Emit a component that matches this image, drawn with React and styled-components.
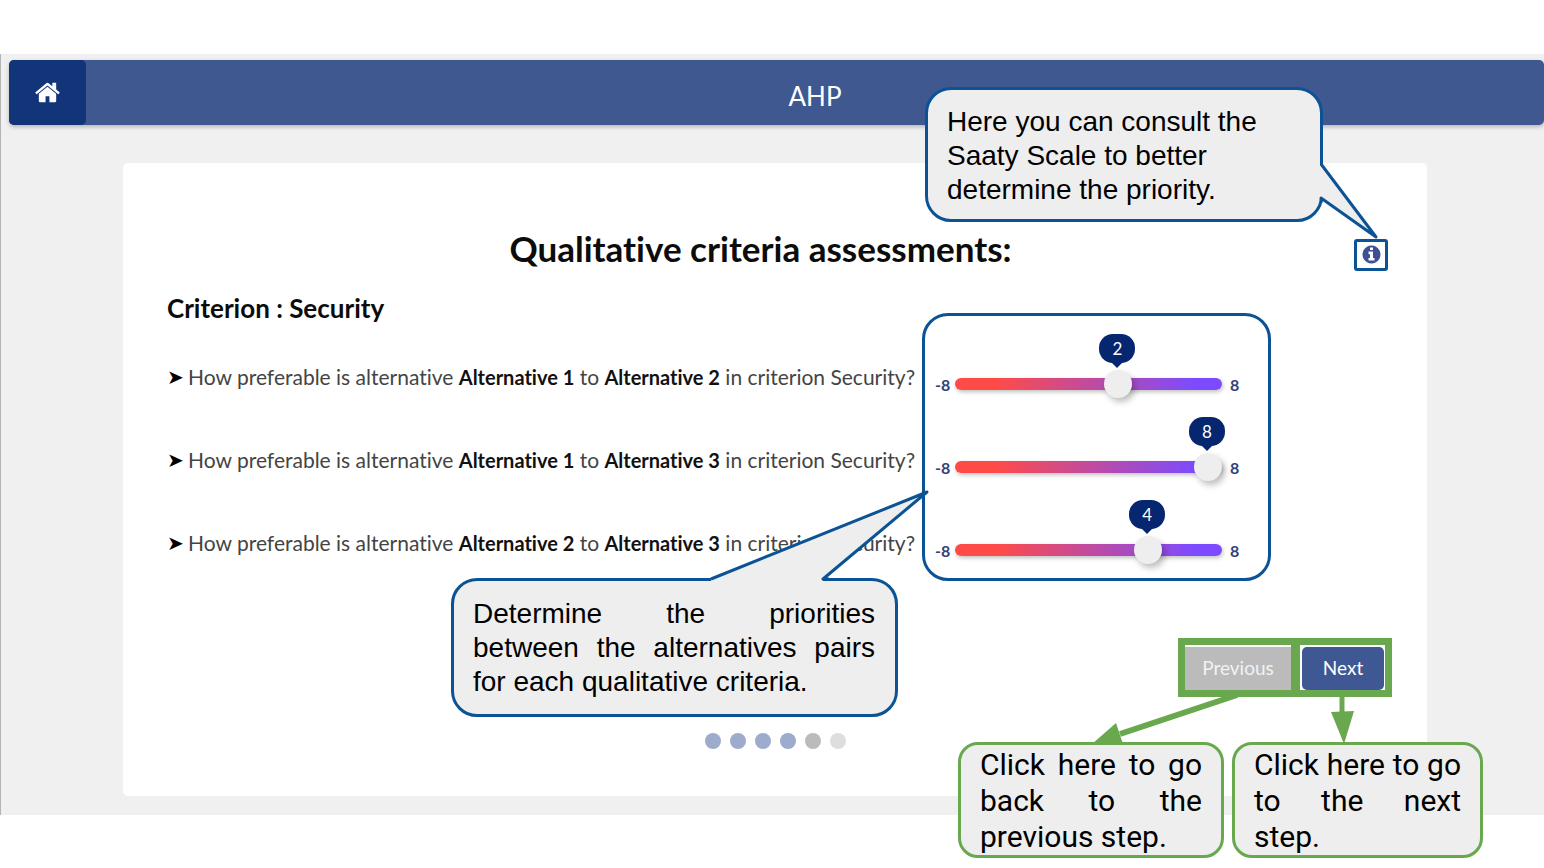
import React, { useState } from "react";
import styled, { createGlobalStyle } from "styled-components";

const NAVY = "#0b5394";
const GREEN = "#6aa84f";

const HOME_PATH =
  "M1472 992v480q0 26-19 45t-45 19h-384v-384h-256v384h-384q-26 0-45-19t-19-45v-480q0-1 .5-3t.5-3l575-474 575 474q1 2 1 6zm223-69l-62 74q-8 9-21 11h-3q-13 0-21-7l-692-577-692 577q-12 8-24 7-13-2-21-11l-62-74q-8-10-7-23.5t11-21.5l719-599q32-26 76-26t76 26l244 204v-195q0-14 9-23t23-9h192q14 0 23 9t9 23v408l219 182q10 8 11 21.5t-7 23.5z";

const INFO_PATH =
  "M1152 1376v-160q0-14-9-23t-23-9h-96v-512q0-14-9-23t-23-9h-320q-14 0-23 9t-9 23v160q0 14 9 23t23 9h96v320h-96q-14 0-23 9t-9 23v160q0 14 9 23t23 9h448q14 0 23-9t9-23zm-128-896v-160q0-14-9-23t-23-9h-192q-14 0-23 9t-9 23v160q0 14 9 23t23 9h192q14 0 23-9t9-23zm640 416q0 209-103 385.5t-279.5 279.5-385.5 103-385.5-103-279.5-279.5-103-385.5 103-385.5 279.5-279.5 385.5-103 385.5 103 279.5 279.5 103 385.5z";

const GlobalStyle = createGlobalStyle`
  *, *::before, *::after { box-sizing: border-box; }
  body {
    margin: 0;
    background: #fff;
    color: #111;
    font-family: Lato, "Open Sans", sans-serif;
    font-variant-ligatures: none;
  }
  h1, h2, p, ul { margin: 0; padding: 0; }
  button { font: inherit; border: 0; padding: 0; cursor: pointer; }
`;

const Page = styled.div`
  min-height: 100vh;
  padding-top: 54px;
`;

const Shell = styled.div`
  background: #f0f0f0;
  border-left: 1px solid #b4b4b4;
  padding: 6px 0 19px 8px;
`;

const TopBar = styled.header`
  display: flex;
  height: 65px;
  border-radius: 5px;
  background: #3f588f;
  color: #fff;
  box-shadow: 0 2px 4px rgba(0, 0, 0, 0.25);
`;

const HomeLink = styled.a`
  display: flex;
  align-items: center;
  justify-content: center;
  width: 77px;
  border-radius: 5px;
  background: #123479;
  color: #fff;
`;

const BarTitle = styled.div`
  flex: 1;
  padding-top: 8px;
  font-size: 26px;
  line-height: 56px;
  text-align: center;
`;

const Main = styled.main`
  padding: 38px 117px 0 114px;
`;

const Card = styled.section`
  padding: 66px 0 47px;
  border-radius: 5px;
  background: #fff;
`;

const Body = styled.div`
  padding: 0 35px 0 44px;
`;

const TitleRow = styled.div`
  display: flex;
  height: 61px;
  padding-right: 4px;
`;

const Title = styled.h1`
  flex: 1;
  font-size: 35px;
  font-weight: 700;
  line-height: 38px;
  text-align: center;
  color: #0c0c0c;
`;

const InfoSpot = styled.div`
  position: relative;
  width: 34px;
  height: 32px;
  margin-top: 10px;
`;

const InfoButton = styled.button`
  display: flex;
  align-items: center;
  justify-content: center;
  width: 100%;
  height: 100%;
  padding-bottom: 1px;
  border: 3px solid ${NAVY};
  border-radius: 3px;
  background: #fff;
  color: #3f4f94;
`;

const Columns = styled.div`
  display: grid;
  grid-template-columns: minmax(0, 755fr) minmax(0, 349fr) minmax(0, 121fr);
`;

const Subtitle = styled.h2`
  margin-bottom: 39px;
  font-size: 26px;
  font-weight: 700;
  line-height: 36px;
  color: #0c0c0c;
`;

const Questions = styled.ul`
  display: grid;
  gap: 59px;
  list-style: none;
`;

const Question = styled.li`
  display: flex;
  font-size: 21px;
  line-height: 24px;
  color: #444;
  white-space: nowrap;

  b {
    font-size: 20px;
    color: #111;
  }
`;

const Marker = styled.span`
  width: 21px;
  font-family: "DejaVu Sans", sans-serif;
  font-size: 20px;
  color: #000;
`;

const Panel = styled.div`
  position: relative;
  display: grid;
  gap: 17px;
  margin-top: 23px;
  padding: 17px 29px 13px 10px;
  border: 3px solid ${NAVY};
  border-radius: 26px;
`;

const SliderRow = styled.div`
  display: flex;
  align-items: flex-end;
  height: 66px;
`;

const Bound = styled.span`
  flex: none;
  width: ${(p) => (p.$low ? "20px" : "17px")};
  padding-left: ${(p) => (p.$low ? "0" : "8px")};
  font-size: 16px;
  font-weight: 700;
  line-height: 28px;
  color: #33417a;
`;

const Track = styled.div`
  position: relative;
  flex: 1;
  height: 30px;
`;

const Range = styled.input`
  display: block;
  appearance: none;
  width: 100%;
  height: 30px;
  margin: 0;
  background: none;

  &::-webkit-slider-runnable-track {
    height: 12px;
    border-radius: 6px;
    background: linear-gradient(90deg, #ff4b48 15%, #7c4bff 90%);
    box-shadow: 1px 2px 4px rgba(0, 0, 0, 0.25);
  }

  &::-webkit-slider-thumb {
    appearance: none;
    width: 28px;
    height: 28px;
    margin-top: -8px;
    border-radius: 50%;
    background: #eee;
    box-shadow: 3px 4px 6px rgba(0, 0, 0, 0.25);
  }
`;

const Bubble = styled.output`
  position: absolute;
  bottom: 36px;
  width: 36px;
  height: 29px;
  margin-left: -19px;
  border-radius: 14px;
  background: #06266f;
  color: #fff;
  font-size: 17px;
  line-height: 30px;
  text-align: center;

  &::after {
    content: "";
    position: absolute;
    top: 28px;
    left: 12px;
    border: 6px solid transparent;
    border-top-color: #06266f;
    border-bottom: 0;
  }
`;

const Actions = styled.div`
  display: flex;
  justify-content: flex-end;
  margin-top: 57px;
`;

const Frame = styled.div`
  position: relative;
  width: ${(p) => p.$width};
  height: 59px;
  margin-left: -5px;
  padding: ${(p) => p.$inset};
  border: 7px solid ${GREEN};
`;

const StepButton = styled.button`
  width: 100%;
  height: 43px;
  padding-bottom: 3px;
  border-radius: ${(p) => (p.$primary ? "5px" : "0")};
  background: ${(p) => (p.$primary ? "#3f5893" : "#bbb")};
  color: ${(p) => (p.$primary ? "#fff" : "#f2f2f2")};
  font-size: 19px;
`;

const Dots = styled.div`
  display: flex;
  justify-content: center;
  gap: 9px;
  margin-top: 36px;
`;

const Dot = styled.span`
  width: 16px;
  height: 16px;
  border-radius: 50%;
  background: ${(p) => p.$color};
`;

const Callout = styled.p`
  position: absolute;
  z-index: 2;
  border: 3px solid ${NAVY};
  border-radius: 26px;
  background: #eee;
  color: #000;
  font-family: "Liberation Sans", Arial, sans-serif;
  font-size: 28px;
  line-height: 34px;
`;

const ScaleCallout = styled(Callout)`
  top: -152px;
  right: 65px;
  width: 398px;
  padding: 15px 19px 12px;
`;

const PriorityCallout = styled(Callout)`
  top: 262px;
  right: calc(100% + 27px);
  width: 447px;
  padding: 16px 20px 15px 19px;
  text-align: justify;
`;

const StepCallout = styled(Callout)`
  top: 97px;
  left: ${(p) => p.$left};
  width: ${(p) => p.$width};
  padding: 2px 19px 0;
  border-color: ${GREEN};
  border-radius: 20px;
  font-family: Roboto, sans-serif;
  font-size: 30px;
  line-height: 36px;
  text-align: justify;
`;

const Drawing = styled.svg`
  position: absolute;
  z-index: 3;
  top: ${(p) => p.$top};
  left: ${(p) => p.$left};
  overflow: visible;
  pointer-events: none;
`;

const PAIRS = [
  { a: "Alternative 1", b: "Alternative 2", value: 2 },
  { a: "Alternative 1", b: "Alternative 3", value: 8 },
  { a: "Alternative 2", b: "Alternative 3", value: 4 },
];

const DOTS = ["#9dabcc", "#9dabcc", "#9dabcc", "#9dabcc", "#bbb", "#dedede"];

function Icon({ path, size }) {
  return (
    <svg
      width={size}
      height={size}
      viewBox="0 0 1792 1792"
      fill="currentColor"
      overflow="visible"
      aria-hidden="true"
    >
      <path d={path} />
    </svg>
  );
}

function Slider({ pair }) {
  const [value, setValue] = useState(pair.value);
  return (
    <SliderRow>
      <Bound $low>-8</Bound>
      <Track>
        <Bubble style={{ left: `calc(14px + (100% - 28px) * ${(value + 8) / 16})` }}>
          {value}
        </Bubble>
        <Range
          type="range"
          min="-8"
          max="8"
          value={value}
          aria-label={`${pair.a} to ${pair.b}`}
          onChange={(e) => setValue(Number(e.target.value))}
        />
      </Track>
      <Bound>8</Bound>
    </SliderRow>
  );
}

export default function App() {
  return (
    <Page>
      <GlobalStyle />
      <Shell>
        <TopBar>
          <HomeLink href="#" aria-label="Home">
            <Icon path={HOME_PATH} size={27} />
          </HomeLink>
          <BarTitle>AHP</BarTitle>
        </TopBar>
        <Main>
          <Card>
            <Body>
              <TitleRow>
                <Title>Qualitative criteria assessments:</Title>
                <InfoSpot>
                  <InfoButton aria-label="Saaty Scale">
                    <Icon path={INFO_PATH} size={21} />
                  </InfoButton>
                  <ScaleCallout>
                    Here you can consult the Saaty Scale to better determine the priority.
                  </ScaleCallout>
                  <Drawing $top="-74px" $left="-33px" width="56" height="74">
                    <path d="M-2 0 L0 0 L55 73 L0 33 L-2 37 Z" fill="#eee" />
                    <path
                      d="M0 -1 L55 72 L0 33 L0 38"
                      fill="none"
                      stroke={NAVY}
                      strokeWidth="3"
                      strokeLinejoin="round"
                    />
                  </Drawing>
                </InfoSpot>
              </TitleRow>
              <Columns>
                <div>
                  <Subtitle>Criterion : Security</Subtitle>
                  <Questions>
                    {PAIRS.map((p) => (
                      <Question key={p.a + p.b}>
                        <Marker>➤</Marker>
                        <span>
                          How preferable is alternative <b>{p.a}</b> to <b>{p.b}</b> in criterion
                          Security?
                        </span>
                      </Question>
                    ))}
                  </Questions>
                </div>
                <Panel>
                  {PAIRS.map((p) => (
                    <Slider key={p.a + p.b} pair={p} />
                  ))}
                  <PriorityCallout>
                    Determine the priorities between the alternatives pairs for each qualitative
                    criteria.
                  </PriorityCallout>
                  <Drawing $top="176px" $left="-214px" width="216" height="90">
                    <path d="M0 87 L216 0 L112 87 V90 H0 Z" fill="#eee" />
                    <path
                      d="M0 87 L216 0 L112 87 H118"
                      fill="none"
                      stroke={NAVY}
                      strokeWidth="3"
                      strokeLinejoin="round"
                    />
                  </Drawing>
                </Panel>
              </Columns>
              <Actions>
                <Frame $width="120px" $inset="2px 0 0">
                  <StepButton>Previous</StepButton>
                  <StepCallout $left="-227px" $width="266px">
                    Click here to go back to the previous step.
                  </StepCallout>
                  <Drawing $top="45px" $left="-93px" width="150" height="54">
                    <path d="M145 5 L28 44" stroke={GREEN} strokeWidth="6" />
                    <path d="M0 54 L24 33 L31 54 Z" fill={GREEN} />
                  </Drawing>
                </Frame>
                <Frame $width="99px" $inset="2px 1px 0 2px">
                  <StepButton $primary>Next</StepButton>
                  <StepCallout $left="-68px" $width="251px">
                    Click here to go to the next step.
                  </StepCallout>
                  <Drawing $top="45px" $left="31px" width="24" height="54">
                    <path d="M11 5 V26" stroke={GREEN} strokeWidth="5" />
                    <path d="M0 22 L23 21 L13 54 Z" fill={GREEN} />
                  </Drawing>
                </Frame>
              </Actions>
            </Body>
            <Dots>
              {DOTS.map((color, i) => (
                <Dot key={i} $color={color} />
              ))}
            </Dots>
          </Card>
        </Main>
      </Shell>
    </Page>
  );
}
